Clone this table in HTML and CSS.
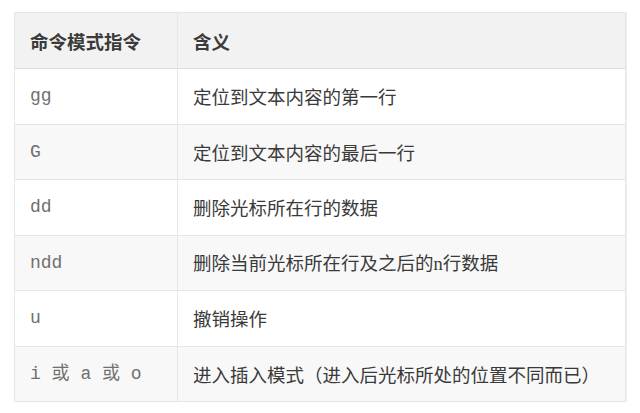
FILE: index.html
```html
<!DOCTYPE html>
<html lang="zh">
<head>
<meta charset="utf-8">
<link rel="stylesheet" href="styles.css">
</head>
<body>
<table class="cmd-table">
  <thead>
    <tr><th class="col-cmd">命令模式指令</th><th>含义</th></tr>
  </thead>
  <tbody>
    <tr><td class="code">gg</td><td>定位到文本内容的第一行</td></tr>
    <tr><td class="code">G</td><td>定位到文本内容的最后一行</td></tr>
    <tr><td class="code">dd</td><td>删除光标所在行的数据</td></tr>
    <tr><td class="code">ndd</td><td>删除当前光标所在行及之后的<span class="inl">n</span>行数据</td></tr>
    <tr><td class="code">u</td><td>撤销操作</td></tr>
    <tr><td class="code">i 或 a 或 o</td><td>进入插入模式（进入后光标所处的位置不同而已）</td></tr>
  </tbody>
</table>
</body>
</html>
```
FILE: styles.css
```css
html, body {
  margin: 0;
  padding: 0;
  background: #ffffff;
}
body {
  padding: 12px 14px 0 14px;
  font-family: "Noto Sans CJK SC", "Noto Sans", sans-serif;
  font-size: 18.5px;
  color: #3a3a3a;
}
.cmd-table {
  width: 612px;
  border-collapse: collapse;
  border: 1px solid #e6e6e6;
  box-shadow: 1px 0 1px rgba(0,0,0,0.06);
}
.cmd-table th,
.cmd-table td {
  text-align: left;
  padding: 0 0 0 15px;
  border: 1px solid #e6e6e6;
  vertical-align: middle;
  line-height: 24px;
}
.cmd-table th {
  background: #f2f2f2;
  height: 55px;
  font-weight: 700;
  color: #3b3b3b;
  border-bottom: 1px solid #dedede;
}
.cmd-table .col-cmd {
  width: 147px;
}
.cmd-table td {
  height: 54.5px;
}
.cmd-table tbody tr:nth-child(even) td {
  background: #f8f8f8;
}
.code {
  font-family: "Liberation Mono", "Noto Sans CJK SC", monospace;
  color: #707070;
  font-size: 18px;
  padding-top: 3px;
}
.inl {
  font-family: "Liberation Serif", serif;
}
```
